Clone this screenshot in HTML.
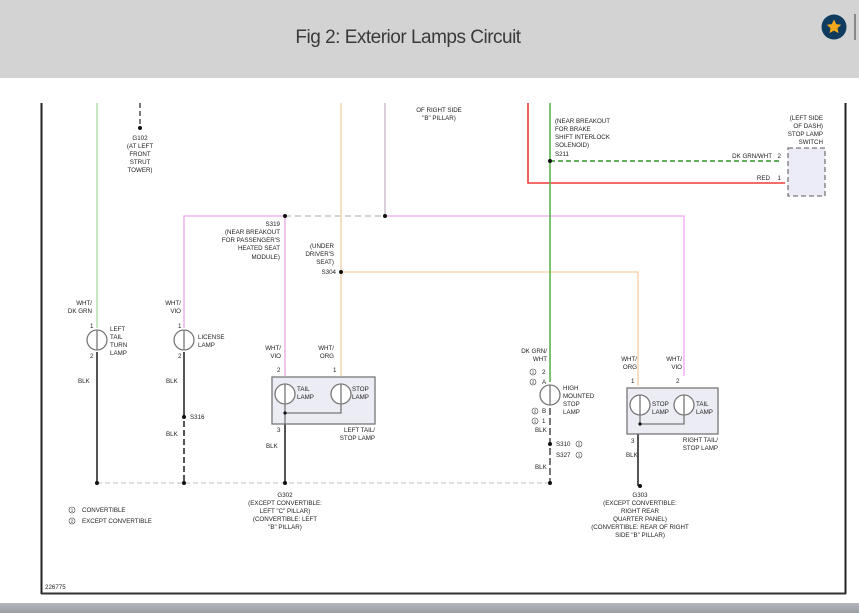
<!DOCTYPE html>
<html><head><meta charset="utf-8"><style>
html,body{margin:0;padding:0;width:859px;height:613px;overflow:hidden;background:#fff;font-family:"Liberation Sans",sans-serif}
.hdr{position:absolute;left:0;top:0;width:859px;height:78px;background:#d3d3d3}
.ttl{position:absolute;left:0;width:816px;top:27px;text-align:center;font-size:19px;color:#3a3a3a;letter-spacing:-0.5px}
.bot{position:absolute;left:0;top:603px;width:859px;height:10px;background:linear-gradient(#b4b8bc,#9a9ea2)}
svg text{font-family:"Liberation Sans",sans-serif;font-size:6.2px;fill:#222}
svg text.c{font-size:4.5px;text-anchor:middle}
</style></head><body>
<div class="hdr"><div class="ttl">Fig 2: Exterior Lamps Circuit</div>
<svg style="position:absolute;left:821px;top:14px" width="26" height="26"><circle cx="13" cy="13" r="12.5" fill="#0e3b5e"/><path d="M13 5.5l2.2 4.6 5 .6-3.7 3.4 1 5-4.5-2.5-4.5 2.5 1-5-3.7-3.4 5-.6z" fill="#f3a81c"/></svg>
<div style="position:absolute;left:854px;top:14px;width:2px;height:26px;background:#888"></div>
</div>
<svg style="position:absolute;left:0;top:0" width="859" height="613">
<line x1="41.5" y1="103" x2="41.5" y2="594" stroke="#222" stroke-width="2"/>
<line x1="845.5" y1="103" x2="845.5" y2="594" stroke="#222" stroke-width="2"/>
<line x1="41" y1="593.5" x2="846" y2="593.5" stroke="#333" stroke-width="2"/>
<g fill="none" stroke-width="1.3">
<line x1="97" y1="103" x2="97" y2="328" stroke="#a8d8a0"/>
<line x1="97" y1="352" x2="97" y2="483" stroke="#555" stroke-width="2"/>
<line x1="140" y1="103" x2="140" y2="126" stroke="#333" stroke-dasharray="5,3"/>
<polyline points="184,328 184,216 285,216" stroke="#e9a9e9"/>
<line x1="285" y1="216" x2="385" y2="216" stroke="#bbb" stroke-dasharray="6,4"/>
<polyline points="385,216 684,216 684,376" stroke="#f0a6f0"/>
<line x1="285" y1="216" x2="285" y2="376" stroke="#e6a6e6"/>
<line x1="385" y1="103" x2="385" y2="216" stroke="#c9b3c9"/>
<line x1="341" y1="103" x2="341" y2="376" stroke="#f3cfa8"/>
<polyline points="341,272 638,272 638,386" stroke="#f5cda3"/>
<polyline points="528,103 528,183 785,183" stroke="#ef3a3a" stroke-width="1.6"/>
<line x1="550" y1="103" x2="550" y2="382" stroke="#5cb34f" stroke-width="1.6"/>
<line x1="550" y1="161" x2="781" y2="161" stroke="#2f8f2a" stroke-width="1.6" stroke-dasharray="5,3"/>
<line x1="184" y1="352" x2="184" y2="412" stroke="#555" stroke-width="2"/>
<line x1="184" y1="412" x2="184" y2="483" stroke="#555" stroke-width="2" stroke-dasharray="6,3"/>
<line x1="285" y1="424" x2="285" y2="483" stroke="#555" stroke-width="2"/>
<line x1="550" y1="408" x2="550" y2="483" stroke="#555" stroke-width="1.6" stroke-dasharray="7,3"/>
<line x1="638" y1="434" x2="638" y2="486" stroke="#555" stroke-width="2"/>
<line x1="97" y1="483" x2="550" y2="483" stroke="#ccc" stroke-dasharray="5,3"/>
<rect x="788" y="148" width="37" height="48" fill="#ececf8" stroke="#777" stroke-dasharray="5,3"/>
<rect x="272" y="377" width="103" height="47" fill="#ececf4" stroke="#777"/>
<rect x="627" y="388" width="91" height="46" fill="#ececf4" stroke="#777"/>
<g stroke="#777" fill="#fff">
<circle cx="97" cy="340" r="10"/><circle cx="184" cy="340" r="10"/>
<circle cx="285" cy="394" r="10"/><circle cx="341" cy="394" r="10"/>
<circle cx="550" cy="395" r="10"/>
<circle cx="640" cy="405" r="10"/><circle cx="684" cy="405" r="10"/>
</g>
<g stroke="#777">
<path d="M97 330v20M184 330v20M285 384v20M341 384v20M550 385v20M640 395v20M684 395v20"/>
<polyline points="285,404 285,413 341,413 341,404"/>
<line x1="285" y1="413" x2="285" y2="424"/>
<polyline points="640,415 640,424 684,424 684,415"/>
</g>
</g>
<g fill="#111">
<circle cx="140" cy="128" r="2"/><circle cx="285" cy="216" r="2"/><circle cx="385" cy="216" r="2"/>
<circle cx="341" cy="272" r="2"/><circle cx="550" cy="161" r="2"/><circle cx="184" cy="417" r="2"/>
<circle cx="285" cy="413" r="1.6"/><circle cx="640" cy="424" r="1.6"/><circle cx="550" cy="444" r="2"/>
<circle cx="97" cy="483" r="2"/><circle cx="184" cy="483" r="2"/><circle cx="285" cy="483" r="2"/><circle cx="550" cy="483" r="2"/><circle cx="640" cy="486" r="2"/>
</g>
<g text-anchor="middle">
<text x="439" y="112">OF RIGHT SIDE</text><text x="439" y="120">"B" PILLAR)</text>
<text x="140" y="140">G102</text><text x="140" y="148">(AT LEFT</text><text x="140" y="156">FRONT</text><text x="140" y="164">STRUT</text><text x="140" y="172">TOWER)</text>
<text x="285" y="497">G302</text><text x="285" y="505">(EXCEPT CONVERTIBLE:</text><text x="285" y="513">LEFT "C" PILLAR)</text><text x="285" y="521">(CONVERTIBLE: LEFT</text><text x="285" y="529">"B" PILLAR)</text>
<text x="640" y="497">G303</text><text x="640" y="505">(EXCEPT CONVERTIBLE:</text><text x="640" y="513">RIGHT REAR</text><text x="640" y="521">QUARTER PANEL)</text><text x="640" y="529">(CONVERTIBLE: REAR OF RIGHT</text><text x="640" y="537">SIDE "B" PILLAR)</text>
</g>
<g>
<text x="555" y="123">(NEAR BREAKOUT</text><text x="555" y="131">FOR BRAKE</text><text x="555" y="139">SHIFT INTERLOCK</text><text x="555" y="147">SOLENOID)</text><text x="555" y="156">S211</text>
<text x="110" y="331">LEFT</text><text x="110" y="339">TAIL</text><text x="110" y="347">TURN</text><text x="110" y="355">LAMP</text>
<text x="198" y="339">LICENSE</text><text x="198" y="347">LAMP</text>
<text x="297" y="391">TAIL</text><text x="297" y="399">LAMP</text><text x="352" y="391">STOP</text><text x="352" y="399">LAMP</text>
<text x="652" y="406">STOP</text><text x="652" y="414">LAMP</text><text x="696" y="406">TAIL</text><text x="696" y="414">LAMP</text>
<text x="563" y="390">HIGH</text><text x="563" y="398">MOUNTED</text><text x="563" y="406">STOP</text><text x="563" y="414">LAMP</text>
<text x="190" y="419">S316</text>
<text x="556" y="446">S310</text><text x="556" y="457">S327</text>
<text x="82" y="512">CONVERTIBLE</text><text x="82" y="523">EXCEPT CONVERTIBLE</text>
<text x="45" y="589">226775</text>
<text x="90" y="328">1</text><text x="90" y="358">2</text><text x="178" y="328">1</text><text x="178" y="358">2</text>
<text x="277" y="372">2</text><text x="333" y="372">1</text><text x="277" y="432">3</text>
<text x="631" y="383">1</text><text x="676" y="383">2</text><text x="631" y="443">3</text>
<text x="542" y="374">2</text><text x="542" y="384">A</text><text x="542" y="413">B</text><text x="542" y="423">1</text>
<text x="78" y="383">BLK</text><text x="166" y="383">BLK</text><text x="166" y="436">BLK</text><text x="266" y="448">BLK</text>
<text x="535" y="432">BLK</text><text x="535" y="469">BLK</text><text x="626" y="457">BLK</text>
</g>
<g text-anchor="end">
<text x="823" y="120">(LEFT SIDE</text><text x="823" y="128">OF DASH)</text><text x="823" y="136">STOP LAMP</text><text x="823" y="144">SWITCH</text>
<text x="772" y="158">DK GRN/WHT</text><text x="781" y="158">2</text><text x="770" y="180">RED</text><text x="781" y="180">1</text>
<text x="280" y="226">S319</text><text x="280" y="234">(NEAR BREAKOUT</text><text x="280" y="242">FOR PASSENGER'S</text><text x="280" y="250">HEATED SEAT</text><text x="280" y="259">MODULE)</text>
<text x="334" y="248">(UNDER</text><text x="334" y="256">DRIVER'S</text><text x="334" y="264">SEAT)</text><text x="336" y="274">S304</text>
<text x="92" y="305">WHT/</text><text x="92" y="313">DK GRN</text>
<text x="181" y="305">WHT/</text><text x="181" y="313">VIO</text>
<text x="281" y="350">WHT/</text><text x="281" y="358">VIO</text><text x="334" y="350">WHT/</text><text x="334" y="358">ORG</text>
<text x="375" y="432">LEFT TAIL/</text><text x="375" y="440">STOP LAMP</text>
<text x="547" y="353">DK GRN/</text><text x="547" y="361">WHT</text>
<text x="637" y="361">WHT/</text><text x="637" y="369">ORG</text><text x="682" y="361">WHT/</text><text x="682" y="369">VIO</text>
<text x="718" y="442">RIGHT TAIL/</text><text x="718" y="450">STOP LAMP</text>
</g>
<g fill="none" stroke="#444" stroke-width="0.6">
<circle cx="72" cy="510" r="3"/><circle cx="72" cy="521" r="3"/>
<circle cx="533" cy="372" r="3"/><circle cx="533" cy="382" r="3"/><circle cx="535" cy="411" r="3"/><circle cx="535" cy="421" r="3"/>
<circle cx="579" cy="444" r="3"/><circle cx="579" cy="455" r="3"/>
</g>
<g>
<text class="c" x="72" y="511.6">1</text><text class="c" x="72" y="522.6">2</text>
<text class="c" x="533" y="373.6">1</text><text class="c" x="533" y="383.6">2</text><text class="c" x="535" y="412.6">2</text><text class="c" x="535" y="422.6">1</text>
<text class="c" x="579" y="445.6">2</text><text class="c" x="579" y="456.6">1</text>
</g>
</svg>
<div class="bot"></div>
</body></html>
